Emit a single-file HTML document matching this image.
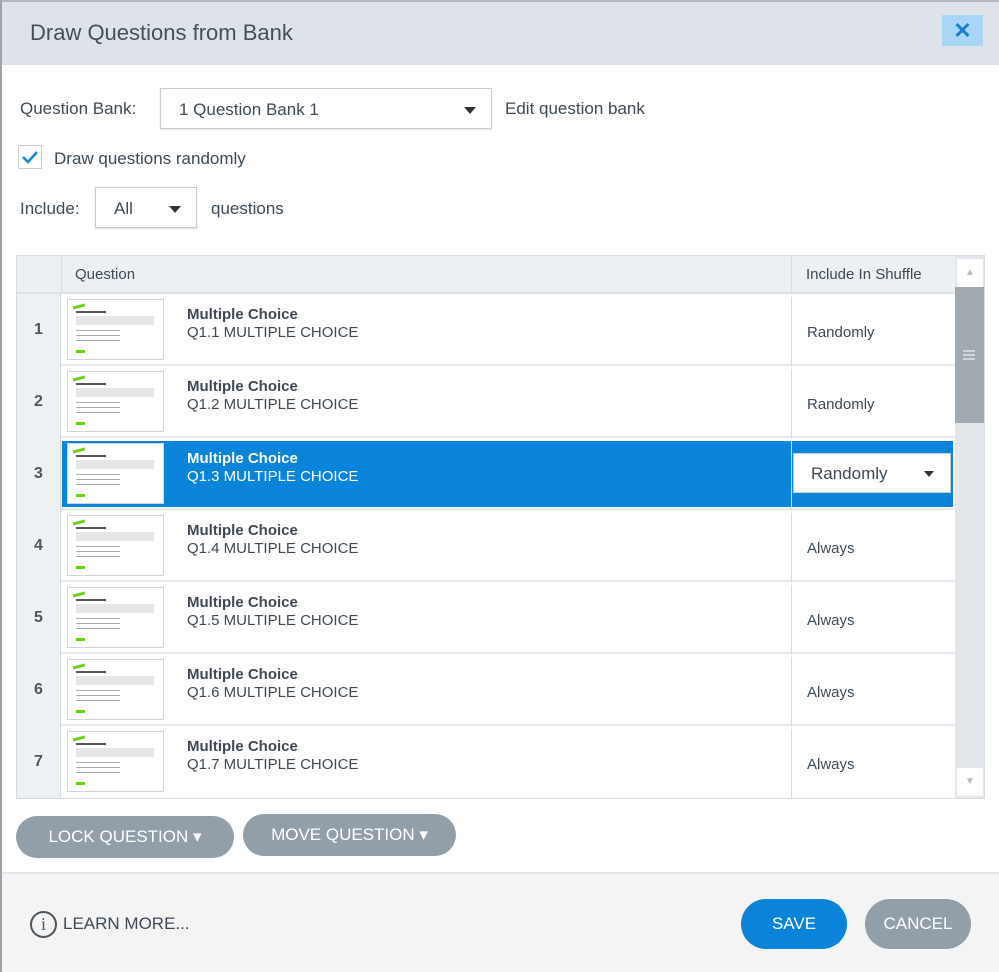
<!DOCTYPE html>
<html><head><style>
*{box-sizing:border-box;margin:0;padding:0}
body{width:999px;height:972px;background:#fff;font-family:"Liberation Sans",sans-serif;color:#3d4a55;position:relative;overflow:hidden}
.abs{position:absolute}
.hdr{left:0;top:0;width:999px;height:65px;background:#dde3e9;border-top:2px solid #b5babe;border-left:2px solid #9da3a8}
.lb{left:0;top:0;width:2px;height:972px;background:#9da3a8}
.sel{border:1px solid #c6cdd3;background:#fff;box-shadow:0 1px 2px rgba(0,0,0,.12)}
.tri{width:0;height:0;border-left:6px solid transparent;border-right:6px solid transparent;border-top:7px solid #333}
.tbl{left:16px;top:255px;width:969px;height:544px;border:1px solid #d5dbe0;background:#fff;overflow:hidden}
.row{position:absolute;left:0;width:938px;height:72px;border-bottom:2px solid #e6eaee}
.num{position:absolute;left:0;top:0;width:44px;height:72px;background:#eef1f4;border-right:1px solid #d5dbe0;font-weight:bold;font-size:16px;text-align:center;line-height:72px;color:#555}
.th{position:absolute;left:50px;top:5px;width:97px;height:61px;border:1px solid #cfd5da;background:#fff}
.th i{position:absolute;display:block}
.th .g{left:5px;top:5px;width:12px;height:3px;background:#6fd01a;transform:rotate(-15deg)}
.th .h{left:8px;top:11px;width:30px;height:2px;background:#555}
.th .b{left:8px;top:16px;width:78px;height:9px;background:#e6e6e6}
.th .l{left:8px;width:44px;height:1px;background:#aaa}
.th .k{left:8px;top:50px;width:9px;height:3px;background:#6fd01a}
.t1{position:absolute;left:170px;top:12px;font-weight:bold;font-size:15px}
.t2{position:absolute;left:170px;top:30px;font-size:15px}
.sh{position:absolute;left:774px;top:3px;width:164px;height:70px;border-left:1px solid #d5dbe0;font-size:15px;line-height:72px;padding-left:15px}
.btn{border-radius:21px;color:#fff;font-size:17px;text-align:center}
</style></head><body>
<div class="abs hdr"></div><div class="abs lb"></div>
<div class="abs" style="left:30px;top:20px;font-size:22px;color:#44505a">Draw Questions from Bank</div>
<div class="abs" style="left:942px;top:15px;width:41px;height:31px;background:#a9d6f6;color:#1a7fd0;font-size:22px;font-weight:bold;text-align:center;line-height:31px">✕</div>

<div class="abs" style="left:20px;top:99px;font-size:17px">Question Bank:</div>
<div class="abs sel" style="left:160px;top:88px;width:332px;height:41px"><span class="abs" style="left:18px;top:11px;font-size:17px">1 Question Bank 1</span><div class="abs tri" style="left:303px;top:18px"></div></div>
<div class="abs" style="left:505px;top:99px;font-size:17px">Edit question bank</div>

<div class="abs" style="left:18px;top:145px;width:24px;height:24px;border:1px solid #c6cdd3"><svg width="22" height="22" viewBox="0 0 22 22"><path d="M4 11 L9 16 L18 6" stroke="#1a88d8" stroke-width="2.6" fill="none"/></svg></div>
<div class="abs" style="left:54px;top:149px;font-size:17px">Draw questions randomly</div>

<div class="abs" style="left:20px;top:199px;font-size:17px">Include:</div>
<div class="abs sel" style="left:95px;top:187px;width:102px;height:41px"><span class="abs" style="left:18px;top:11px;font-size:17px">All</span><div class="abs tri" style="left:73px;top:18px"></div></div>
<div class="abs" style="left:211px;top:199px;font-size:17px">questions</div>

<div class="abs tbl">
 <div class="abs" style="left:0;top:0;width:938px;height:38px;background:#edf0f3;border-bottom:2px solid #dde2e7"></div>
 <div class="abs" style="left:44px;top:0;width:1px;height:38px;background:#d5dbe0"></div>
 <div class="abs" style="left:774px;top:0;width:1px;height:38px;background:#d5dbe0"></div>
 <div class="abs" style="left:58px;top:10px;font-size:15px">Question</div>
 <div class="abs" style="left:789px;top:10px;font-size:15px">Include In Shuffle</div>

 <div class="row" style="top:38px"><div class="num">1</div><div class="th"><i class="g"></i><i class="h"></i><i class="b"></i><i class="l" style="top:30px"></i><i class="l" style="top:35px"></i><i class="l" style="top:40px"></i><i class="k"></i></div><div class="t1">Multiple Choice</div><div class="t2">Q1.1 MULTIPLE CHOICE</div><div class="sh">Randomly</div></div>
 <div class="row" style="top:110px"><div class="num">2</div><div class="th"><i class="g"></i><i class="h"></i><i class="b"></i><i class="l" style="top:30px"></i><i class="l" style="top:35px"></i><i class="l" style="top:40px"></i><i class="k"></i></div><div class="t1">Multiple Choice</div><div class="t2">Q1.2 MULTIPLE CHOICE</div><div class="sh">Randomly</div></div>
 <div class="row" style="top:182px"><div class="num">3</div>
  <div class="abs" style="left:45px;top:3px;width:891px;height:66px;background:#0a84d8"></div>
  <div class="th" style="left:50px"><i class="g"></i><i class="h"></i><i class="b"></i><i class="l" style="top:30px"></i><i class="l" style="top:35px"></i><i class="l" style="top:40px"></i><i class="k"></i></div><div class="t1" style="color:#fff">Multiple Choice</div><div class="t2" style="color:#fff">Q1.3 MULTIPLE CHOICE</div>
  <div class="abs" style="left:774px;top:3px;width:1px;height:66px;background:#d5dbe0"></div>
  <div class="abs" style="left:776px;top:15px;width:158px;height:40px;background:#fff;border:1px solid #c6cdd3"><span class="abs" style="left:17px;top:10px;font-size:17px">Randomly</span><div class="abs tri" style="left:130px;top:17px;border-top-width:6px;border-left-width:5px;border-right-width:5px"></div></div></div>
 <div class="row" style="top:254px"><div class="num">4</div><div class="th"><i class="g"></i><i class="h"></i><i class="b"></i><i class="l" style="top:30px"></i><i class="l" style="top:35px"></i><i class="l" style="top:40px"></i><i class="k"></i></div><div class="t1">Multiple Choice</div><div class="t2">Q1.4 MULTIPLE CHOICE</div><div class="sh">Always</div></div>
 <div class="row" style="top:326px"><div class="num">5</div><div class="th"><i class="g"></i><i class="h"></i><i class="b"></i><i class="l" style="top:30px"></i><i class="l" style="top:35px"></i><i class="l" style="top:40px"></i><i class="k"></i></div><div class="t1">Multiple Choice</div><div class="t2">Q1.5 MULTIPLE CHOICE</div><div class="sh">Always</div></div>
 <div class="row" style="top:398px"><div class="num">6</div><div class="th"><i class="g"></i><i class="h"></i><i class="b"></i><i class="l" style="top:30px"></i><i class="l" style="top:35px"></i><i class="l" style="top:40px"></i><i class="k"></i></div><div class="t1">Multiple Choice</div><div class="t2">Q1.6 MULTIPLE CHOICE</div><div class="sh">Always</div></div>
 <div class="row" style="top:470px;border:none"><div class="num">7</div><div class="th"><i class="g"></i><i class="h"></i><i class="b"></i><i class="l" style="top:30px"></i><i class="l" style="top:35px"></i><i class="l" style="top:40px"></i><i class="k"></i></div><div class="t1">Multiple Choice</div><div class="t2">Q1.7 MULTIPLE CHOICE</div><div class="sh">Always</div></div>

 <div class="abs" style="left:938px;top:0;width:30px;height:544px;background:#e3e7eb"></div>
 <div class="abs" style="left:940px;top:3px;width:26px;height:28px;background:#fff;color:#bbb;font-size:10px;text-align:center;line-height:28px">▲</div>
 <div class="abs" style="left:938px;top:31px;width:29px;height:136px;background:#a1aab1"></div>
 <div class="abs" style="left:946px;top:94px;width:12px;height:10px;border-top:2px solid #d0d5d9;border-bottom:2px solid #d0d5d9"><div style="margin-top:2px;height:2px;background:#d0d5d9"></div></div>
 <div class="abs" style="left:940px;top:512px;width:26px;height:28px;background:#fff;color:#bbb;font-size:10px;text-align:center;line-height:28px">▼</div>
</div>

<div class="abs btn" style="left:16px;top:816px;width:218px;height:42px;background:#929fa8;line-height:42px">LOCK QUESTION ▾</div>
<div class="abs btn" style="left:243px;top:814px;width:213px;height:42px;background:#929fa8;line-height:42px">MOVE QUESTION ▾</div>

<div class="abs" style="left:2px;top:872px;width:997px;height:100px;background:#f4f4f4;border-top:2px solid #e2e6ea"></div>
<div class="abs" style="left:30px;top:911px;width:27px;height:27px;border:2px solid #4a555e;border-radius:50%;text-align:center;font-family:'Liberation Serif',serif;font-size:18px;line-height:23px;color:#4a555e">i</div>
<div class="abs" style="left:63px;top:914px;font-size:17px">LEARN MORE...</div>
<div class="abs btn" style="left:741px;top:899px;width:106px;height:50px;background:#0a84d8;line-height:50px;border-radius:25px">SAVE</div>
<div class="abs btn" style="left:865px;top:899px;width:106px;height:50px;background:#929fa8;line-height:50px;border-radius:25px">CANCEL</div>
</body></html>
